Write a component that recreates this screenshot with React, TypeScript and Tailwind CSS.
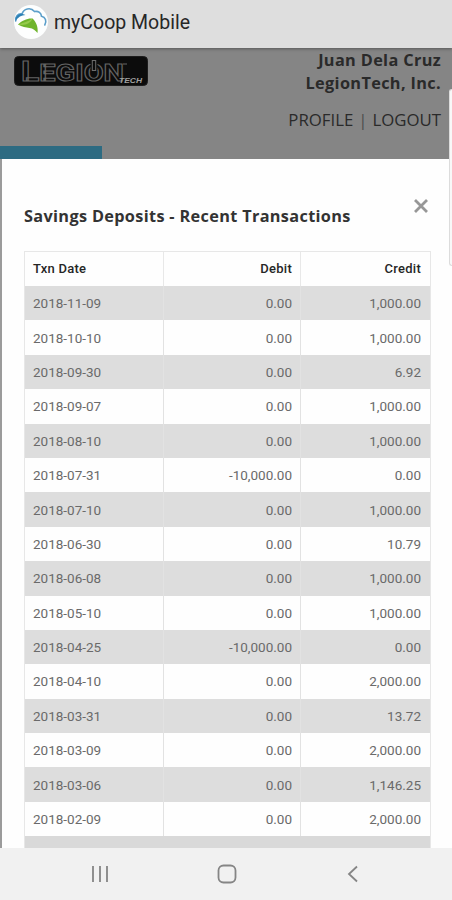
const transactions = [
  { date: '2018-11-09', debit: '0.00', credit: '1,000.00' },
  { date: '2018-10-10', debit: '0.00', credit: '1,000.00' },
  { date: '2018-09-30', debit: '0.00', credit: '6.92' },
  { date: '2018-09-07', debit: '0.00', credit: '1,000.00' },
  { date: '2018-08-10', debit: '0.00', credit: '1,000.00' },
  { date: '2018-07-31', debit: '-10,000.00', credit: '0.00' },
  { date: '2018-07-10', debit: '0.00', credit: '1,000.00' },
  { date: '2018-06-30', debit: '0.00', credit: '10.79' },
  { date: '2018-06-08', debit: '0.00', credit: '1,000.00' },
  { date: '2018-05-10', debit: '0.00', credit: '1,000.00' },
  { date: '2018-04-25', debit: '-10,000.00', credit: '0.00' },
  { date: '2018-04-10', debit: '0.00', credit: '2,000.00' },
  { date: '2018-03-31', debit: '0.00', credit: '13.72' },
  { date: '2018-03-09', debit: '0.00', credit: '2,000.00' },
  { date: '2018-03-06', debit: '0.00', credit: '1,146.25' },
  { date: '2018-02-09', debit: '0.00', credit: '2,000.00' },
]

function CloudLogo() {
  return (
    <svg viewBox="0 0 34 34" className="size-[34px]">
      <circle cx="17" cy="17" r="17" fill="#fdfefe" />
      <path
        d="M1.800 16C1 11.500 4 8.300 8 9 9.500 3.800 16.500 1.500 20.500 6.500c4-.8 6.800 1.500 7 4.800 4 .8 5.500 5 3.300 8.700"
        fill="none"
        stroke="#5c9fca"
        strokeWidth="1.600"
        strokeLinecap="round"
      />
      <path d="M1.500 16C1.200 11.500 4.500 8.500 8 8.700l3.500 1.300c-4 0-7.500 2-10 6z" fill="#2d80b5" />
      <path d="M4 19.500c4-4 9.500-6.500 14.500-6 3.500 3 6 9 5 14.500-2-2.700-4.500-4.500-8-5-3.500-.5-7.500-1-11.500-3.500z" fill="#6fb42c" />
      <path d="M4 19.500c5-1.500 10.500-3 14.500-6-2 5-7.500 7.500-14.500 6z" fill="#95ca4c" />
    </svg>
  )
}

function LegionLogo() {
  return (
    <svg viewBox="0 0 134 30" className="h-[30px] w-[134px]">
      <rect x=".5" y=".5" width="133" height="29" rx="4" fill="#0c0c0c" stroke="#1d1d1d" />
      <text
        x="7"
        y="25"
        fontSize="23"
        fontFamily="Roboto, sans-serif"
        fontWeight="700"
        fill="#0c0c0c"
        stroke="#646464"
        textLength="103"
        lengthAdjust="spacingAndGlyphs"
      >
        <tspan fontSize="27">L</tspan>EGION
      </text>
      {/* power symbol in the O */}
      <path d="M80 5v9" stroke="#0c0c0c" strokeWidth="7" />
      <rect x="78.300" y="4.500" width="3.400" height="10" fill="none" stroke="#6c6c6c" />
      <text
        x="105"
        y="27"
        fontSize="8"
        fontWeight="700"
        fontStyle="italic"
        fontFamily="Liberation Sans, sans-serif"
        fill="#a0a0a0"
        textLength="23"
        lengthAdjust="spacingAndGlyphs"
      >
        TECH
      </text>
      <path d="M109 8h4" stroke="#666" />
    </svg>
  )
}

export default function App() {
  return (
    <div className="relative flex h-[900px] w-[452px] flex-col overflow-hidden bg-white font-['Roboto',sans-serif]">
      {/* App bar */}
      <header className="z-10 flex h-12 shrink-0 items-center gap-[6px] bg-[#dedede] pb-1 pl-[14px] shadow-[0_1px_3px_rgba(0,0,0,0.35)]">
        <CloudLogo />
        <h1 className="whitespace-nowrap pt-[2px] text-[19.5px] leading-6 text-[#272727]">myCoop Mobile</h1>
      </header>

      {/* Dimmed page behind the dialog */}
      <section className="flex h-[111px] shrink-0 flex-col justify-between bg-[#858585]">
        <div className="flex justify-between pl-[14px] pr-[11px]">
          <div className="pt-2">
            <LegionLogo />
          </div>
          <div className="pt-px text-right font-['Open_Sans',sans-serif] text-[#2a2a2a]">
            <p className="text-[16.3px] font-bold leading-[23px] tracking-[0.35px]">Juan Dela Cruz</p>
            <p className="text-[16.3px] font-bold leading-[23px] tracking-[0.35px]">LegionTech, Inc.</p>
            <nav className="mt-[13px] flex justify-end gap-[5px] text-[16.8px] leading-6">
              <span>PROFILE</span>
              <span className="text-[#4c4c4c]">|</span>
              <span>LOGOUT</span>
            </nav>
          </div>
        </div>
        <div className="h-[13px] w-[102px] bg-[#2d6b82]" />
      </section>

      {/* Dialog */}
      <main className="flex-1 overflow-hidden border-l-2 border-[#9b9b9b] bg-[#fefefe] pl-[22px] pr-[21px]">
        <div className="flex h-[92px] justify-between pt-[38px]">
          <h2 className="whitespace-nowrap pt-[7px] font-['Open_Sans',sans-serif] text-[16.3px] font-bold leading-6 tracking-[0.33px] text-[#333]">
            Savings Deposits - Recent Transactions
          </h2>
          <svg viewBox="0 0 16 16" className="mr-[2px] mt-px size-4 shrink-0">
            <path d="M2 2l12 12M14 2L2 14" stroke="#979797" strokeWidth="2.800" />
          </svg>
        </div>
        <table className="w-[407px] table-fixed border-separate border-spacing-0 border-x border-t border-[#e7e7e7] text-[13.5px] leading-4 text-[#6a6a6a]">
          <colgroup>
            <col className="w-[139px]" />
            <col className="w-[137px]" />
            <col />
          </colgroup>
          <thead>
            <tr className="h-[34px] text-[13px] font-medium tracking-[0.25px] text-[#262626]">
              <th className="border-r border-[#e8e8e8] p-0 pl-2 text-left font-medium">Txn Date</th>
              <th className="border-r border-[#e8e8e8] p-0 pr-2 text-right font-medium">Debit</th>
              <th className="p-0 pr-[9px] text-right font-medium">Credit</th>
            </tr>
          </thead>
          <tbody>
            {transactions.map((txn) => (
              <tr key={txn.date} className="h-[34.4px] odd:bg-[#dddddd]">
                <td className="border-r border-[#e2e2e2] p-0 pl-2">{txn.date}</td>
                <td className="border-r border-[#e2e2e2] p-0 pr-2 text-right">{txn.debit}</td>
                <td className="p-0 pr-[9px] text-right">{txn.credit}</td>
              </tr>
            ))}
            <tr className="h-[34.4px] bg-[#d9d9d9]">
              <td colSpan={3} />
            </tr>
          </tbody>
        </table>
      </main>

      {/* System navigation */}
      <footer className="flex h-[52px] shrink-0 items-center gap-[108px] bg-[#f1f1f1] pl-[91px]">
        <svg viewBox="0 0 18 18" className="size-[18px]">
          <path d="M2 1v16M9 1v16M16 1v16" stroke="#858585" strokeWidth="1.800" />
        </svg>
        <svg viewBox="0 0 20 20" className="size-5">
          <rect x="1.500" y="1.500" width="17" height="17" rx="5" fill="none" stroke="#858585" strokeWidth="1.800" />
        </svg>
        <svg viewBox="0 0 12 18" className="ml-[2px] h-[18px] w-3">
          <path d="M10 1.500L2 9l8 7.500" fill="none" stroke="#858585" strokeWidth="1.800" />
        </svg>
      </footer>

      {/* Edge panel handle */}
      <div className="absolute right-0 top-[89px] z-10 h-[177px] w-[3px] rounded-l-[3px] border-y border-l border-[#dcdcdc] bg-[#f8f8f8]" />
    </div>
  )
}
